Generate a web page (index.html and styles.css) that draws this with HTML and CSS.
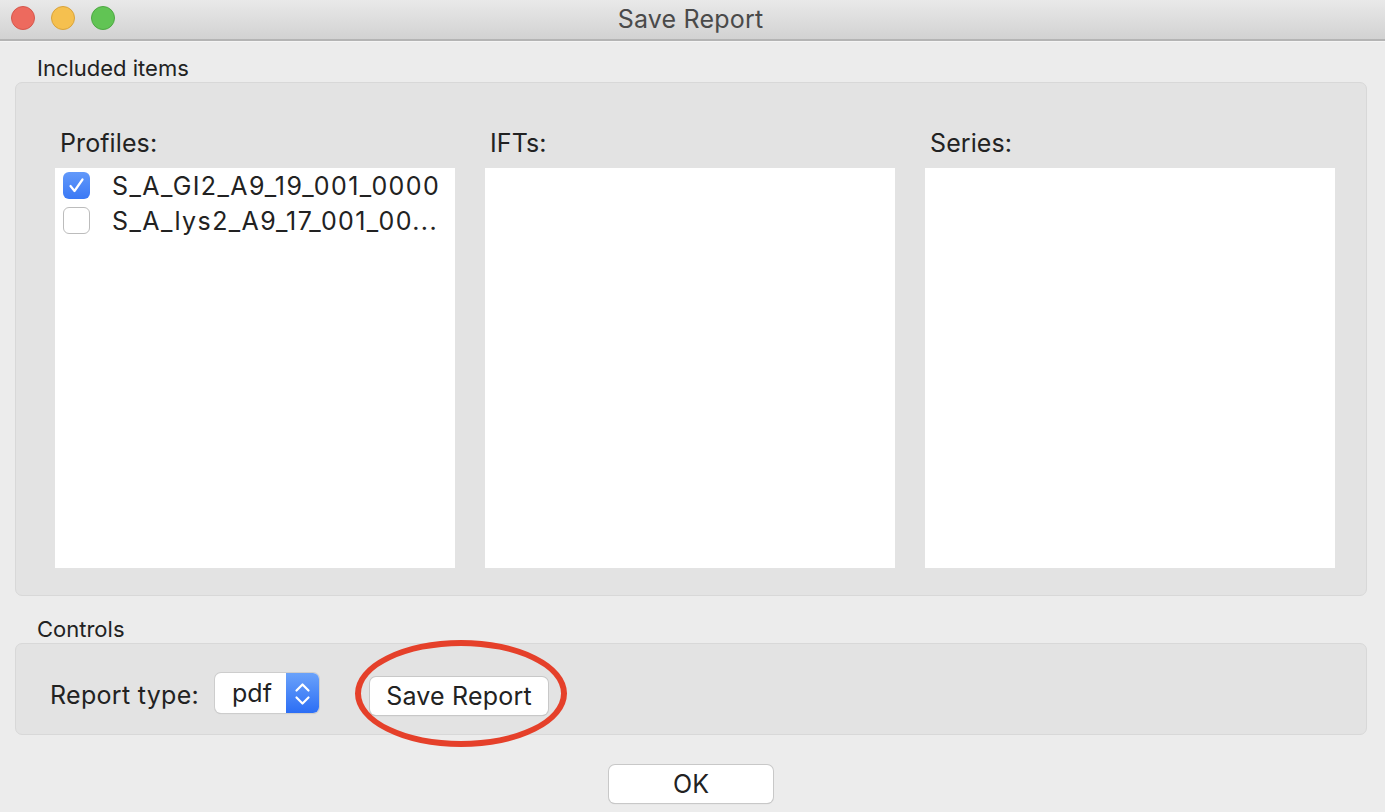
FILE: index.html
```html
<!DOCTYPE html>
<html>
<head>
<meta charset="utf-8">
<link rel="stylesheet" href="styles.css">
</head>
<body>
<div class="window">
  <div class="titlebar">
    <div class="lights">
      <span class="light red"></span>
      <span class="light yellow"></span>
      <span class="light green"></span>
    </div>
    <div class="title">Save Report</div>
  </div>
  <div class="content">
    <div class="section-label">Included items</div>
    <div class="group group-items">
      <div class="column col-profiles">
        <div class="col-label">Profiles:</div>
        <div class="listbox">
          <div class="row">
            <span class="checkbox checked">
              <svg viewBox="0 0 27 27" width="27" height="27"><path d="M7.5 14 L11.5 19 L19.5 7.5" fill="none" stroke="#fff" stroke-width="2.2" stroke-linecap="round" stroke-linejoin="round"/></svg>
            </span>
            <span class="item">S_A_GI2_A9_19_001_0000</span>
          </div>
          <div class="row">
            <span class="checkbox"></span>
            <span class="item">S_A_lys2_A9_17_001_00...</span>
          </div>
        </div>
      </div>
      <div class="column col-wide">
        <div class="col-label">IFTs:</div>
        <div class="listbox"></div>
      </div>
      <div class="column col-wide">
        <div class="col-label">Series:</div>
        <div class="listbox"></div>
      </div>
    </div>
    <div class="section-label label-controls">Controls</div>
    <div class="group group-controls">
      <span class="ctrl-label">Report type:</span>
      <div class="popup">
        <span class="popup-value">pdf</span>
        <span class="stepper">
          <svg viewBox="0 0 33 40" width="33" height="40"><path d="M10.5 17.5 L16.5 11.5 L22.5 17.5" fill="none" stroke="#fff" stroke-width="2.2" stroke-linecap="round" stroke-linejoin="round"/><path d="M10.5 24.5 L16.5 30.5 L22.5 24.5" fill="none" stroke="#fff" stroke-width="2.2" stroke-linecap="round" stroke-linejoin="round"/></svg>
        </span>
      </div>
      <div class="save-wrap">
        <button class="btn btn-save">Save Report</button>
        <span class="highlight"></span>
      </div>
    </div>
    <div class="footer">
      <button class="btn btn-ok">OK</button>
    </div>
  </div>
</div>
</body>
</html>
```
FILE: styles.css
```css
* { box-sizing: border-box; }
html, body {
  margin: 0;
  padding: 0;
  width: 1385px;
  height: 812px;
  overflow: hidden;
  background: #ececec;
  font-family: Inter, "Noto Sans", "Liberation Sans", sans-serif;
  color: #222222;
}
.window {
  width: 1385px;
  height: 812px;
  display: flex;
  flex-direction: column;
}
.titlebar {
  height: 41px;
  flex: none;
  position: relative;
  display: flex;
  align-items: center;
  justify-content: center;
  background: linear-gradient(#e9e9e9, #d2d2d2);
  border-bottom: 2px solid #b4b4b4;
  box-shadow: 0 1px 0 #f4f4f4;
}
.lights {
  position: absolute;
  left: 11px;
  top: 6px;
  display: flex;
  gap: 16px;
}
.light {
  width: 24px;
  height: 24px;
  border-radius: 50%;
  display: block;
}
.light.red { background: #ed6a5e; border: 1px solid #d5574c; }
.light.yellow { background: #f5c04f; border: 1px solid #d9a33b; }
.light.green { background: #61c454; border: 1px solid #4ea843; }
.title {
  font-size: 25px;
  color: #4a4a4a;
  margin-top: -2px;
  margin-left: -4px;
  letter-spacing: 0.2px;
}
.content {
  flex: 1;
  padding: 0 18px 0 15px;
  display: flex;
  flex-direction: column;
}
.section-label {
  font-size: 22px;
  height: 26px;
  line-height: 26px;
  margin-top: 14px;
  margin-left: 22px;
  margin-bottom: 1px;
}
.label-controls {
  margin-top: 20px;
  margin-bottom: 1px;
}
.group {
  background: #e3e3e3;
  border: 1px solid #d8d8d8;
  border-radius: 7px;
}
.group-items {
  height: 514px;
  display: flex;
  gap: 30px;
  padding: 41px 0 0 39px;
}
.column {
  display: flex;
  flex-direction: column;
}
.col-profiles { width: 400px; }
.col-wide { width: 410px; }
.col-label {
  font-size: 25px;
  height: 44px;
  line-height: 38px;
  padding-left: 5px;
  letter-spacing: 0.1px;
}
.listbox {
  background: #ffffff;
  height: 400px;
}
.row {
  display: flex;
  align-items: center;
  height: 35px;
  padding-left: 8px;
}
.checkbox {
  width: 27px;
  height: 27px;
  border-radius: 6px;
  background: #fff;
  border: 1.5px solid #bcbcbc;
  display: block;
  flex: none;
}
.checkbox.checked {
  background: linear-gradient(#6299fa, #3b79f5);
  border: none;
}
.checkbox svg { display: block; }
.item {
  font-size: 25px;
  margin-left: 22px;
  white-space: nowrap;
  letter-spacing: 1.4px;
}
.group-controls {
  height: 92px;
  display: flex;
  align-items: center;
  padding: 9px 0 0 34px;
}
.ctrl-label {
  font-size: 25px;
  margin-right: 16px;
  margin-top: 3px;
  letter-spacing: 0.3px;
}
.popup {
  width: 104px;
  height: 40px;
  display: flex;
  border-radius: 6px;
  background: #fff;
  box-shadow: 0 0 0 1px #cdcdcd, 0 1px 1px rgba(0,0,0,0.15);
  overflow: hidden;
  margin-top: -1px;
}
.popup-value {
  flex: 1;
  font-size: 25px;
  line-height: 40px;
  padding-left: 17px;
}
.stepper {
  width: 33px;
  height: 40px;
  background: linear-gradient(#6aa2fa, #2c6ef5);
  display: block;
}
.stepper svg { display: block; }
.save-wrap {
  position: relative;
  margin-left: 51px;
  display: flex;
}
.btn {
  font-family: inherit;
  background: #fff;
  border: none;
  border-radius: 6px;
  box-shadow: 0 0 0 1px #c8c8c8, 0 1px 1px rgba(0,0,0,0.2);
  color: #222222;
  padding: 0;
}
.btn-save {
  width: 178px;
  height: 38px;
  font-size: 25px;
  margin-top: 5px;
  letter-spacing: 0.2px;
}
.highlight {
  position: absolute;
  left: -15px;
  top: -32px;
  width: 212px;
  height: 107px;
  border: 6px solid #e5402a;
  border-radius: 50%;
  pointer-events: none;
}
.footer {
  display: flex;
  justify-content: center;
  padding-top: 30px;
}
.btn-ok {
  width: 164px;
  height: 38px;
  font-size: 25px;
}
```
